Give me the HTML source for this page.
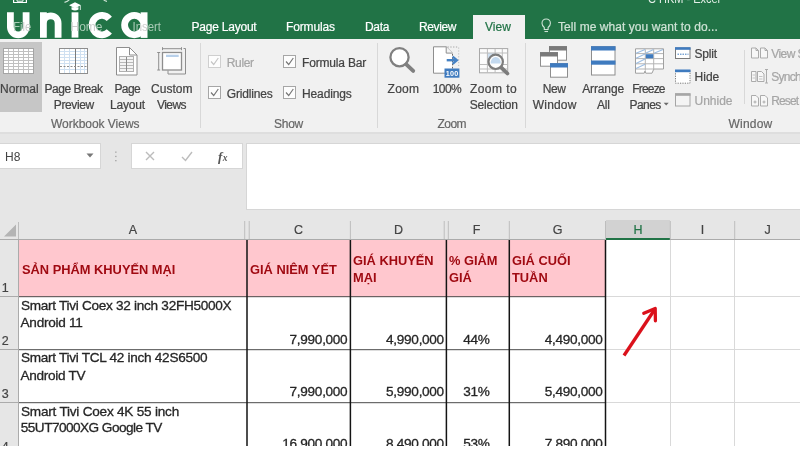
<!DOCTYPE html>
<html>
<head>
<meta charset="utf-8">
<style>
*{box-sizing:border-box;margin:0;padding:0}
html,body{width:800px;height:450px;overflow:hidden;background:#fff}
body{will-change:transform;font-family:"Liberation Sans",sans-serif;position:relative;color:#444}
.abs{position:absolute}
#top{left:0;top:0;width:800px;height:39px;background:#217346}
.tab{position:absolute;-webkit-text-stroke:0.200px;top:19.500px;font-size:12px;color:#fff;white-space:nowrap;line-height:14px}
#viewtab{left:472.500px;top:15px;width:52.500px;height:25px;background:#f1f1f1}
#ribbon{left:0;top:39px;width:800px;height:95px;background:#f1f1f1;border-bottom:2px solid #dedede}
.rl{position:absolute;-webkit-text-stroke:0.220px;font-size:12px;color:#444;white-space:nowrap;line-height:16px;text-align:center}
.gl{position:absolute;-webkit-text-stroke:0.200px;font-size:12px;color:#666;white-space:nowrap;line-height:14px;text-align:center;top:117px}
.sep{position:absolute;top:43px;width:1px;height:85px;background:#d8d8d8}
#fbar{left:0;top:134px;width:800px;height:86px;background:#e6e6e6}
#namebox{left:-1px;top:143px;width:101.500px;height:26px;background:#fff;border:1px solid #d6d6d6}
#fxbox{left:131px;top:143px;width:111.500px;height:26px;background:#fff;border:1px solid #d6d6d6}
#finput{left:245.500px;top:143px;width:556px;height:67px;background:#fff;border:1px solid #d6d6d6}
#colhdr{left:0;top:220px;width:800px;height:20px;background:#e6e6e6}
.ch{position:absolute;-webkit-text-stroke:0.200px;top:222px;font-size:12.500px;color:#444;text-align:center;line-height:16px}
.rh{position:absolute;left:0;width:18px;font-size:12.500px;-webkit-text-stroke:0.200px;color:#444;line-height:14px;padding-left:1.700px;background:#e6e6e6}
#grid{left:18px;top:240px;width:782px;height:206px;background:#fff}
.hc{position:absolute;background:#ffc7ce;color:#a00a12;font-weight:bold;font-size:12.85px;line-height:17px}
.vl{position:absolute;width:1px;background:#000}
.hl{position:absolute;height:1px;background:#000}
.gv{position:absolute;width:1px;background:#d4d4d4}
.gh{position:absolute;height:1px;background:#d4d4d4}
.ct{position:absolute;-webkit-text-stroke:0.300px #262626;font-size:13.600px;color:#262626;line-height:17px;white-space:nowrap}
.num{position:absolute;-webkit-text-stroke:0.300px #262626;font-size:13.600px;letter-spacing:-0.300px;color:#262626;line-height:14px;white-space:nowrap;text-align:right}
#bottom{left:0;top:446px;width:800px;height:4px;background:#fff}
</style>
</head>
<body>
<div id="top" class="abs"></div>
<div id="viewtab" class="abs"></div>
<div class="tab" id="b1" style="left:191.5px;letter-spacing:-0.22px">Page Layout</div>
<div class="tab" id="b2" style="left:286.0px;letter-spacing:-0.13px">Formulas</div>
<div class="tab" id="b3" style="left:365.0px;letter-spacing:-0.34px">Data</div>
<div class="tab" id="b4" style="left:419.0px;letter-spacing:-0.39px">Review</div>
<div class="tab" id="b5" style="left:485.0px;color:#217346;letter-spacing:0.05px">View</div>
<div class="tab" id="b6" style="left:558.0px;color:#cfe3d6;letter-spacing:0.06px">Tell me what you want to do...</div>

<!--TOP-->
<svg class="abs" style="left:0;top:0" width="800" height="40" viewBox="0 0 800 40">
<defs>
<g id="wm" fill="none" stroke="#fff" stroke-width="6.800">
<path d="M10.400 12.300V27a7.850 7.850 0 0 0 15.700 0V12.300"/>
<path d="M43.400 37.800V12.300M43.400 23.200a7.350 7.350 0 0 1 14.700 0V37.800"/>
<path d="M75 12.300V37.600"/>
<path d="M109.300 18.900a9.700 9.700 0 1 0 0 12.400"/>
<circle cx="134.300" cy="25.100" r="9.700"/>
<path d="M144.100 12.300V37.900"/>
<!-- graduation cap -->
<path d="M69 5.300l6-3l6 3l-6 3z" fill="#fff" stroke="none"/>
<path d="M71.500 7.200v2.300q3.500 2 7 0v-2.300" fill="#fff" stroke="none"/>
<path d="M80.300 5.500v4.500" stroke-width="0.800"/>
</g>
<mask id="wmm" maskUnits="userSpaceOnUse" x="0" y="0" width="200" height="40"><rect x="0" y="0" width="200" height="40" fill="#000"/><use href="#wm"/></mask>
<g id="tabtxt" font-family="Liberation Sans, sans-serif" font-size="12">
<text x="13.300" y="31" textLength="18" lengthAdjust="spacingAndGlyphs">File</text><text x="70.500" y="31" textLength="32" lengthAdjust="spacingAndGlyphs">Home</text><text x="132.500" y="31" textLength="28.500" lengthAdjust="spacingAndGlyphs">Insert</text>
</g>
</defs>
<!-- title bar remnants -->
<g fill="none" stroke="#fff" stroke-width="1.200">
<path d="M13.600 -2v4.500h12.800v-4.500"/><path d="M17 -1v2.200h6v-2.200" stroke-width="1"/>
<path d="M64.500 2.300q4 -1 5.500 -3.500" stroke="#cfe3d6"/>
<path d="M103 -1q1.500 2 4 2.300" stroke="#cfe3d6"/>
</g>
<text x="648" y="2.500" font-family="Liberation Sans, sans-serif" font-size="12" fill="#e4efe8" textLength="72" lengthAdjust="spacingAndGlyphs">C HKM - Excel</text>
<use href="#tabtxt" fill="#a9cbb6"/>
<use href="#wm"/>
<g mask="url(#wmm)"><use href="#tabtxt" fill="#cdcdcd"/></g>
<!-- lightbulb -->
<g fill="none" stroke="#cfe3d6" stroke-width="1.100">
<path d="M544.300 27.500c-1.800-1.500-2.300-2.800-2.300-4.300a4.200 4.200 0 0 1 8.400 0c0 1.500-.5 2.800-2.300 4.300v2h-3.800z"/>
<path d="M544.500 31.500h3.500"/>
</g>
</svg>
<!--/TOP-->
<div id="ribbon" class="abs"></div>
<!--RIBBON-->
<!-- pressed Normal button -->
<div class="abs" style="left:0;top:42px;width:42px;height:70px;background:#c6c6c6"></div>
<div class="sep" style="left:200px"></div>
<div class="sep" style="left:377px"></div>
<div class="sep" style="left:525px"></div>
<div class="sep" style="left:744px;top:50px;height:54px"></div>

<div class="rl" id="t1" style="left:0.0px;top:81px;letter-spacing:0.01px">Normal</div>
<div class="rl" id="t2" style="left:44.5px;top:81px;letter-spacing:-0.47px">Page Break</div>
<div class="rl" id="t3" style="left:53.8px;top:97px;letter-spacing:-0.38px">Preview</div>
<div class="rl" id="t4" style="left:114.5px;top:81px;letter-spacing:-0.63px">Page</div>
<div class="rl" id="t5" style="left:110.0px;top:97px;letter-spacing:-0.17px">Layout</div>
<div class="rl" id="t6" style="left:151.0px;top:81px;letter-spacing:0.03px">Custom</div>
<div class="rl" id="t7" style="left:157.0px;top:97px;letter-spacing:-0.56px">Views</div>
<div class="gl" id="g1" style="left:51.0px;letter-spacing:-0.03px">Workbook Views</div>

<div class="rl" id="t8" style="left:226.8px;top:54.600px;color:#a6a6a6;letter-spacing:-0.34px">Ruler</div>
<div class="rl" id="t9" style="left:302.0px;top:54.600px;letter-spacing:-0.18px">Formula Bar</div>
<div class="rl" id="t10" style="left:226.8px;top:85.800px;letter-spacing:-0.18px">Gridlines</div>
<div class="rl" id="t11" style="left:302.0px;top:85.800px;letter-spacing:-0.12px">Headings</div>
<div class="gl" id="g2" style="left:274.0px;letter-spacing:-0.26px">Show</div>

<div class="rl" id="t12" style="left:387.5px;top:81px;letter-spacing:0.30px">Zoom</div>
<div class="rl" id="t13" style="left:432.8px;top:81px;letter-spacing:-0.63px">100%</div>
<div class="rl" id="t14" style="left:470.0px;top:81px;letter-spacing:0.43px">Zoom to</div>
<div class="rl" id="t15" style="left:469.7px;top:97px;letter-spacing:-0.14px">Selection</div>
<div class="gl" id="g3" style="left:437.5px;letter-spacing:-0.55px">Zoom</div>

<div class="rl" id="t16" style="left:542.8px;top:81px;letter-spacing:-0.41px">New</div>
<div class="rl" id="t17" style="left:532.8px;top:97px;letter-spacing:0.17px">Window</div>
<div class="rl" id="t18" style="left:582.2px;top:81px;letter-spacing:-0.13px">Arrange</div>
<div class="rl" id="t19" style="left:597.0px;top:97px;letter-spacing:-0.21px">All</div>
<div class="rl" id="t20" style="left:632.3px;top:81px;letter-spacing:-0.83px">Freeze</div>
<div class="rl" id="t21" style="left:629.6px;top:97px;letter-spacing:-0.59px">Panes</div>
<div class="rl" id="t22" style="left:694.5px;top:46px;letter-spacing:-0.17px">Split</div>
<div class="rl" id="t23" style="left:694.5px;top:69px;letter-spacing:0.03px">Hide</div>
<div class="rl" id="t24" style="left:694.5px;top:93px;color:#a6a6a6;letter-spacing:-0.01px">Unhide</div>
<div class="rl" id="t25" style="left:771.3px;top:46px;color:#a6a6a6;letter-spacing:-0.57px">View S</div>
<div class="rl" id="t26" style="left:771.3px;top:69px;color:#a6a6a6;letter-spacing:-0.73px">Synch</div>
<div class="rl" id="t27" style="left:771.3px;top:93px;color:#a6a6a6;letter-spacing:-0.91px">Reset</div>
<div class="gl" id="g4" style="left:728.5px;letter-spacing:0.22px">Window</div>
<!--ICONS-->
<svg class="abs" style="left:0;top:0" width="800" height="136" viewBox="0 0 800 136">
<!-- Normal icon -->
<g>
<rect x="3.5" y="48.5" width="30" height="25" fill="#fff" stroke="#a4a4a4"/>
<g stroke="#c0c0c0" stroke-width="1">
<path d="M8.5 49v24M13.5 49v24M18.5 49v24M23.5 49v24M28.5 49v24"/>
<path d="M4 51.5h29M4 54.5h29M4 57.5h29M4 60.5h29M4 63.5h29M4 66.5h29M4 69.5h29"/>
</g>
</g>
<!-- Page Break Preview icon -->
<g>
<rect x="59.5" y="48.5" width="28" height="25" fill="#fff" stroke="#8e8e8e"/>
<g stroke="#cfe0f1" stroke-width="1">
<path d="M64.5 49v24M69.5 49v24M80.5 49v24M84.5 49v24"/>
<path d="M60 51.5h27M60 54.5h27M60 57.5h27M60 60.5h27M60 63.5h27M60 69.5h27"/>
</g>
<path d="M75.5 49v24" stroke="#7a7a7a"/>
<path d="M60 66.5h27" stroke="#8c8c8c" stroke-dasharray="2 1.5"/>
</g>
<!-- Page Layout icon -->
<g>
<path d="M116.5 47.5h13l7.5 7.5v20h-20.5z" fill="#fff" stroke="#8e8e8e"/>
<path d="M129.5 47.5v7.5h7.5" fill="none" stroke="#8e8e8e"/>
<rect x="119.5" y="56.5" width="14" height="15" fill="#f4f4f4" stroke="#b0b0b0"/>
<path d="M120 59.5h13M120 62.5h13M120 65.5h13M120 68.5h13" stroke="#b8b8b8"/>
<path d="M126.5 57v14" stroke="#8a8a8a"/>
</g>
<!-- Custom Views icon -->
<g fill="none" stroke="#8e8e8e">
<path d="M183.5 48.5h2v25.500h-17.500v-3.500"/>
<rect x="162.500" y="52.500" width="19" height="17.500" fill="#fff" stroke-width="1.300"/>
<path d="M162.500 48.700h19M162.500 47.200v3M181.500 47.200v3"/>
<path d="M158.700 52.500v17.500M157.200 52.500h3M157.200 70h3"/>
<rect x="166" y="54.700" width="12.700" height="2.300" fill="#b8d0ea" stroke="none"/>
</g>
<!-- checkboxes -->
<g fill="#fdfdfd">
<rect x="208.500" y="55.500" width="12" height="12" stroke="#cfcfcf"/>
<rect x="283.500" y="55.500" width="12" height="12" stroke="#a6a6a6"/>
<rect x="208.500" y="86.500" width="12" height="12" stroke="#a6a6a6"/>
<rect x="283.500" y="86.500" width="12" height="12" stroke="#a6a6a6"/>
</g>
<g fill="none" stroke-width="1.150">
<path d="M211 61.500l2.700 3l4.600-6.500" stroke="#c4c4c4"/>
<path d="M286 61.500l2.700 3l4.600-6.500" stroke="#767676"/>
<path d="M211 92.500l2.700 3l4.600-6.500" stroke="#767676"/>
<path d="M286 92.500l2.700 3l4.600-6.500" stroke="#767676"/>
</g>
<!-- Zoom icon -->
<g fill="none" stroke="#7a7a7a">
<circle cx="399.500" cy="57.200" r="9.100" stroke-width="2.300" fill="#fff" stroke="#808080"/>
<path d="M406.300 64.300L413.200 70.900" stroke-width="3.900" stroke-linecap="round" stroke="#808080"/>
</g>
<!-- 100% icon -->
<g>
<path d="M433.500 46.800h12.700l6.300 6.300v20.100h-19z" fill="#fff" stroke="none"/>
<path d="M452.500 73.200h-19v-26.400h12.700l6.300 6.300" fill="none" stroke="#8e8e8e"/>
<path d="M446.200 46.800v6.300h6.300" fill="#f4f4f4" stroke="#8e8e8e"/>
<path d="M447.500 47h11.200" fill="none" stroke="#a6a6a6" stroke-dasharray="1.300 1.500"/>
<path d="M458.700 47.500v18.500" fill="none" stroke="#bdbdbd" stroke-dasharray="1.200 1.700"/>
<path d="M452.500 54v14.500" fill="none" stroke="#6a6a6a" stroke-dasharray="1.700 1.500"/>
<path d="M446.700 60.200h9.500" stroke="#4682c4" stroke-width="2.400"/>
<path d="M452.600 56.600l4.300 3.600l-4.300 3.600" fill="none" stroke="#4682c4" stroke-width="2.300"/>
<rect x="444.500" y="68.500" width="14.900" height="9.200" fill="#3f7bbf"/>
<text x="445.700" y="75.800" font-family="Liberation Sans, sans-serif" font-size="7.200" font-weight="bold" fill="#fff" textLength="12.600" lengthAdjust="spacing">100</text>
</g>
<!-- Zoom to selection icon -->
<g>
<rect x="479.500" y="48.600" width="28.200" height="24.200" fill="#fcfcfc" stroke="#a8a8a8"/>
<rect x="487.500" y="53" width="8" height="6" fill="#cfe0f1"/>
<path d="M480 53h27.500M480 64.500h27.500M480 69h27.500M487.400 49v24M495.100 49v24M502.300 49v24" stroke="#bcbcbc" fill="none"/>
<circle cx="495.700" cy="61.800" r="7.200" fill="#fdfdfd" stroke="#7c7c7c" stroke-width="2.200"/>
<path d="M490.600 63.400a5.100 6.400 0 0 1 10.200 0z" fill="#c3d9ef"/>
<path d="M501.400 67.700l6 5.800" stroke="#7c7c7c" stroke-width="3.800" stroke-linecap="round"/>
</g>
<!-- New Window icon -->
<g stroke="#8e8e8e">
<rect x="549.500" y="46.700" width="17" height="13.500" fill="#fff"/>
<rect x="549.500" y="46.700" width="17" height="3.300" fill="#7a7a7a" stroke="#7a7a7a"/>
<rect x="540.500" y="52.700" width="17" height="13.500" fill="#fff"/>
<rect x="540.500" y="52.700" width="17" height="3.300" fill="#7a7a7a" stroke="#7a7a7a"/>
<rect x="550.500" y="63.700" width="17" height="13.500" fill="#fff"/>
<rect x="550.500" y="63.700" width="17" height="3.300" fill="#3f7bbf" stroke="#3f7bbf"/>
</g>
<!-- Arrange All icon -->
<g>
<rect x="591.500" y="46.700" width="23.500" height="28.300" fill="#fff" stroke="#8e8e8e"/>
<rect x="591" y="46.200" width="24.500" height="4.300" fill="#3f7bbf"/>
<rect x="591" y="60.500" width="24.500" height="4.200" fill="#3f7bbf"/>
</g>
<!-- Freeze Panes icon -->
<g>
<path d="M635.500 48.800h28v20.200h-9.700l-1.800 4.200h-6.200l-0.800-2.200l-0.800 2.200h-8.700z" fill="#fff" stroke="#a0a0a0"/>
<path d="M636 53.600h27M636 58.600h27M636 63.800h27M636 69h18M645.300 49.300v21.500M653.700 49.300v20" stroke="#b4b4b4" fill="none"/>
<path d="M636 53.200l9-3.800M645.500 53.200l8-3.800M654 53.200l9-3.800M636 58.200l9-4.200M636 63.400l9-4.400M636 68.600l9-4.400" stroke="#9cbde3" stroke-width="1.100" fill="none"/>
<rect x="645.800" y="54.200" width="7.500" height="4.100" fill="#3f7bbf"/>
</g>
<!-- Split -->
<g>
<rect x="675.500" y="48" width="14.500" height="10.500" fill="#fff" stroke="#7a7a7a"/>
<rect x="675" y="47.200" width="15.500" height="2.600" fill="#3f7bbf"/>
<path d="M677.500 54.200h11" stroke="#3f7bbf" stroke-dasharray="1.500 1"/>
</g>
<!-- Hide -->
<g>
<rect x="675.500" y="70.500" width="14.500" height="12.700" fill="#fff" stroke="#7a7a7a" stroke-dasharray="1.200 1.200"/>
<rect x="675" y="69.500" width="15.500" height="2.700" fill="#3f7bbf"/>
</g>
<!-- Unhide -->
<g>
<rect x="675.500" y="94" width="14.500" height="12" fill="#f4f4f4" stroke="#a6a6a6"/>
<rect x="675" y="93.200" width="15.500" height="2.600" fill="#a6a6a6"/>
</g>
<!-- View side by side / Synch / Reset (disabled) -->
<g fill="#f7f7f7" stroke="#ababab">
<path d="M751.500 48h4.500l2.500 2.500v7.500h-7z"/><path d="M756 48v2.500h2.500" fill="none"/>
<path d="M760.500 48h4.500l2.500 2.500v7.500h-7z"/><path d="M765 48v2.500h2.500" fill="none"/>
<path d="M751.500 71.500h4.500v10h-4.500z"/><path d="M757.500 71.500h4l2.500 2.500v7.500h-6.500z"/><path d="M759 76.500h3.500M759 79h3.500M752.500 75h2.500M752.500 78h2.500" fill="none" stroke="#c4c4c4"/>
<path d="M766.500 69.500v13.500M765 69.500h3M765 83h3" fill="none"/>
<path d="M751.500 95.500h4.500l2.500 2.500v8h-7z"/><path d="M760.500 95.500h4.500l2.500 2.500v8h-7z"/>
<path d="M753.500 102h3M755 100.500v3M762.500 102h3M764 100.500v3" fill="none"/>
</g>
<!-- Freeze panes dropdown arrow -->
<path d="M663.700 102.800h5l-2.500 2.800z" fill="#6a6a6a"/>
</svg>
<!--/ICONS-->
<!--/RIBBON-->

<div id="fbar" class="abs"></div>
<div id="namebox" class="abs"></div>
<div id="fxbox" class="abs"></div>
<div id="finput" class="abs"></div>
<div id="colhdr" class="abs"></div>
<div id="grid" class="abs"></div>
<!--SHEET-->
<!-- formula bar content -->
<div class="abs" id="nb" style="left:5px;top:150px;font-size:12px;color:#444;line-height:14px">H8</div>
<svg class="abs" style="left:0;top:136px" width="260" height="84" viewBox="0 136 260 84">
<path d="M86.500 153.500h7l-3.500 4z" fill="#777"/>
<g fill="#a0a0a0"><rect x="115.200" y="151.500" width="1.300" height="1.300"/><rect x="115.200" y="155.800" width="1.300" height="1.300"/><rect x="115.200" y="160" width="1.300" height="1.300"/></g>
<path d="M146 152l8 8M154 152l-8 8" stroke="#bcbcbc" stroke-width="1.400" fill="none"/>
<path d="M182 157l3.500 3.500l6.500-8.500" stroke="#bcbcbc" stroke-width="1.400" fill="none"/>
<text x="218" y="161" font-family="Liberation Serif, serif" font-style="italic" font-weight="bold" font-size="13" fill="#555">f</text>
<text x="222.800" y="160.500" font-family="Liberation Serif, serif" font-style="italic" font-weight="bold" font-size="9.500" fill="#555">x</text>
</svg>

<!-- column headers -->
<div class="abs" style="left:606px;top:220px;width:64px;height:20px;background:#d2d2d2;border-bottom:2px solid #217346"></div>
<div class="ch" style="left:19px;width:228px">A</div>
<div class="ch" style="left:247px;width:103px">C</div>
<div class="ch" style="left:350px;width:97px">D</div>
<div class="ch" style="left:445.500px;width:62px">F</div>
<div class="ch" style="left:509px;width:97px">G</div>
<div class="ch" style="left:606px;width:64px;color:#217346">H</div>
<div class="ch" style="left:670px;width:65px">I</div>
<div class="ch" style="left:735px;width:65px">J</div>
<svg class="abs" style="left:0;top:220px" width="800" height="20" viewBox="0 220 800 20">
<path d="M4 236.500h12v-12z" fill="#b4b4b4"/>
<path d="M18.500 222v18M244.700 221v19M249.200 221v19M350.400 221v19M444.200 221v19M448.300 221v19M509.300 221v19M605.500 221v19M670.300 221v19M734.700 221v19" stroke="#bdbdbd"/>
<path d="M0 239.500h606M670 239.500h130" stroke="#ababab"/>
</svg>

<!-- row headers -->
<div class="rh" style="top:240px;height:57px;padding-top:41.300px">1</div>
<div class="rh" style="top:297px;height:53px;padding-top:37.300px">2</div>
<div class="rh" style="top:350px;height:53px;padding-top:37.300px">3</div>
<div class="rh" style="top:403px;height:43px;padding-top:37.300px">4</div>

<!-- header cells -->
<div class="hc" style="left:19px;top:240px;width:587px;height:57px"></div>
<div class="hc" style="left:22px;top:261px;background:none;white-space:nowrap" id="h1">SẢN PHẨM KHUYẾN MẠI</div>
<div class="hc" style="left:250px;top:261px;background:none;white-space:nowrap" id="h2">GIÁ NIÊM YẾT</div>
<div class="hc" style="left:353px;top:251.700px;background:none;white-space:nowrap" id="h3">GIÁ KHUYẾN</div>
<div class="hc" style="left:353px;top:268.700px;background:none;white-space:nowrap" id="h3b">MẠI</div>
<div class="hc" style="left:449px;top:251.700px;background:none;white-space:nowrap" id="h4">% GIẢM</div>
<div class="hc" style="left:449px;top:268.700px;background:none;white-space:nowrap" id="h4b">GIÁ</div>
<div class="hc" style="left:512px;top:251.700px;background:none;white-space:nowrap" id="h5">GIÁ CUỐI</div>
<div class="hc" style="left:512px;top:268.700px;background:none;white-space:nowrap" id="h5b">TUẦN</div>

<!-- grid lines -->
<svg class="abs" style="left:0;top:240px" width="800" height="206" viewBox="0 240 800 206">
<path d="M670.500 240v206M734.500 240v206M606 296.500h194M606 349.500h194M606 402.500h194" stroke="#d9d9d9" fill="none"/>
<path d="M0 296.500h18M0 349.500h18M0 402.500h18M18.500 240v206" stroke="#ababab" fill="none"/>
<path d="M19 296.700h587M19 349.700h587M19 402.700h587" stroke="#4a4a4a" fill="none"/>
<path d="M247 240v206M350.400 240v206M446.400 240v206M509.300 240v206M605.500 240v206" stroke="#141414" stroke-width="1.500" fill="none"/>
<!-- red arrow -->
<path d="M624 355.500L654 310.500" stroke="#db111b" stroke-width="3.300" fill="none" stroke-linecap="butt"/>
<path d="M643.800 313.300L655.200 308.500L655.400 320.800" stroke="#db111b" stroke-width="3.300" fill="none" stroke-linecap="round" stroke-linejoin="round"/>
</svg>

<!-- cell text -->
<div class="ct" id="c1" style="left:21.0px;top:297.3px;letter-spacing:-0.29px">Smart Tivi Coex 32 inch 32FH5000X</div>
<div class="ct" id="c1b" style="left:20.6px;top:314.3px;letter-spacing:-0.29px">Android 11</div>
<div class="ct" id="c2" style="left:21.0px;top:349.2px;letter-spacing:-0.29px">Smart Tivi TCL 42 inch 42S6500</div>
<div class="ct" id="c2b" style="left:20.6px;top:366.6px;letter-spacing:-0.31px">Android TV</div>
<div class="ct" id="c3" style="left:21.0px;top:402.5px;letter-spacing:-0.23px">Smart Tivi Coex 4K 55 inch</div>
<div class="ct" id="c3b" style="left:20.8px;top:419.2px;letter-spacing:-0.53px">55UT7000XG Google TV</div>

<div class="num" id="n1" style="left:247px;width:100.400px;top:333.100px">7,990,000</div>
<div class="num" id="n2" style="left:351px;width:92.900px;top:333.100px">4,990,000</div>
<div class="num" id="n3" style="left:445.500px;width:62px;top:333.100px;text-align:center">44%</div>
<div class="num" id="n4" style="left:510px;width:92.500px;top:333.100px">4,490,000</div>
<div class="num" id="n5" style="left:247px;width:100.400px;top:385.200px">7,990,000</div>
<div class="num" id="n6" style="left:351px;width:92.900px;top:385.200px">5,990,000</div>
<div class="num" id="n7" style="left:445.500px;width:62px;top:385.200px;text-align:center">31%</div>
<div class="num" id="n8" style="left:510px;width:92.500px;top:385.200px">5,490,000</div>
<div class="num" id="n9" style="left:247px;width:100.400px;top:437.200px">16,900,000</div>
<div class="num" id="n10" style="left:351px;width:92.900px;top:437.200px">8,490,000</div>
<div class="num" id="n11" style="left:445.500px;width:62px;top:437.200px;text-align:center">53%</div>
<div class="num" id="n12" style="left:510px;width:92.500px;top:437.200px">7,890,000</div>
<!--/SHEET-->
<div id="bottom" class="abs"></div>
</body>
</html>
